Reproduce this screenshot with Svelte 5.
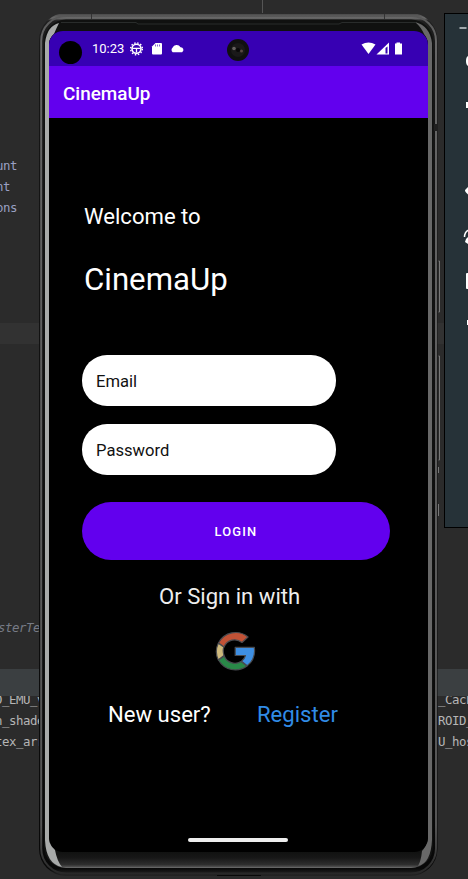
<script>
  const codeLines = ['ount', 'nt ', 'ons'];
  const logRows = [
    { left: 'D_EMU_v', right: '_Cach' },
    { left: 'n_shade', right: 'ROID_' },
    { left: 'tex_arr', right: 'U_hos' }
  ];
</script>

<div class="desktop">
  <div class="editor">
    <div class="tab-gap"><span class="split"></span></div>
    <div class="code">
      {#each codeLines as line}
        <div class="code-line">{line}</div>
      {/each}
    </div>
    <div class="caret-row"></div>
    <div class="hint">sterTe.</div>
    <div class="panel-head"></div>
    <div class="log">
      {#each logRows as row}
        <div class="log-row"><span>{row.left}</span><span class="right">{row.right}</span></div>
      {/each}
    </div>
  </div>

  <div class="toolbar">
    <svg width="23" height="513" viewBox="445 14 23 513">
      <rect x="459.500" y="27" width="7" height="2" fill="#a0a8ac" />
      <g fill="#fff">
        <path d="M468 56q-2 1-2 5t2 5z" />
        <rect x="466" y="102" width="3" height="6" />
        <path d="M468 187q-3.500 3-3 4t3 3.500z" />
        <path d="M468 237q-3 2-3 5l3 2z" />
        <rect x="466" y="273" width="3" height="16" rx="1" />
        <rect x="467" y="320" width="2" height="5" />
      </g>
      <path d="M464.500 237q0-5 4-7" fill="none" stroke="#fff" stroke-width="1.500" />
    </svg>
  </div>

  <div class="phone">
    <svg class="frame" width="401" height="864" viewBox="39 13 401 864">
      <defs>
        <linearGradient id="shell" x1="0" y1="13" x2="0" y2="877" gradientUnits="userSpaceOnUse">
          <stop offset="0" stop-color="#1a1a1a" />
          <stop offset=".0018" stop-color="#505050" />
          <stop offset=".006" stop-color="#6c6c6c" />
          <stop offset=".009" stop-color="#202020" />
          <stop offset=".05" stop-color="#161616" />
          <stop offset=".99" stop-color="#080808" />
          <stop offset=".995" stop-color="#1b1b1b" />
          <stop offset="1" stop-color="#262626" />
        </linearGradient>
        <linearGradient id="glass" x1="0" y1="851" x2="0" y2="868" gradientUnits="userSpaceOnUse">
          <stop offset="0" stop-color="#101110" />
          <stop offset=".4" stop-color="#171717" />
          <stop offset=".8" stop-color="#2e2e2e" />
          <stop offset=".94" stop-color="#505050" />
          <stop offset="1" stop-color="#777" />
        </linearGradient>
        <linearGradient id="rim" x1="0" y1="13" x2="0" y2="877" gradientUnits="userSpaceOnUse">
          <stop offset="0" stop-color="#555" />
          <stop offset=".03" stop-color="#666" />
          <stop offset=".94" stop-color="#555" />
          <stop offset=".985" stop-color="#303030" />
          <stop offset="1" stop-color="#252525" />
        </linearGradient>
      </defs>
      <path d="M438.500 261h1v51h-1M438.500 356h1v104h-1M438.500 467v6M438.500 504v12" fill="none" stroke="#777" />
      <rect x="39" y="13" width="398.500" height="863" rx="27" fill="url(#shell)" />
      <rect x="41.200" y="16" width="394.800" height="857.500" rx="25" fill="none" stroke="url(#rim)" stroke-width="2" />
      <rect x="44" y="19.500" width="389" height="848.500" rx="22" fill="url(#glass)" />
      <path d="M45 840V43Q47 26 59 23Q56 29 54 34Q49 38 49 45V838Q51 845 55 850Q57 861 62 867Q46 864 45 840Z" fill="#a8aaa9" />
      <path d="M432 840V43Q430 26 415 22Q421 27 424 34Q428 39 428 45V838Q426 847 422 851Q421 861 418 866Q431 863 432 840Z" fill="#686868" />
      <path d="M61 22.500h75l2 1.500h201l3-1.500h74" stroke="#292c2b" fill="none" />
      <path d="M91.500 14v5M384.500 14v5" stroke="#333" />
      <path d="M217 875.500h44" stroke="#090909" />
      <rect x="434" y="124" width="3" height="7" fill="#202020" />
    </svg>

    <main class="screen">
      <header class="status">
        <span class="punch"></span>
        <span class="time">10:23</span>
        <svg class="left-icons" width="60" height="16" viewBox="130 41 60 16">
          <circle cx="136.500" cy="48.800" r="4.500" fill="none" stroke="#fff" stroke-width="1.600" />
          <circle cx="136.500" cy="48.800" r="5.900" fill="none" stroke="#fff" stroke-width="1.400" stroke-dasharray="1.500 1.589" />
          <path d="M132.500 48.300h8M136.500 48.500v4" stroke="#fff" stroke-width="1.300" />
          <path d="M155.500 43h5.500q1 0 1 1v9.500q0 1-1 1h-8q-1 0-1-1V46.500z" fill="#fff" />
          <path d="M155.500 44.500v2M157.500 44.500v2M159.500 44.500v2" stroke="#3700b3" stroke-width=".6" />
          <path d="M172.700 52.200a2.800 2.800 0 0 1-.2-4.400 4.500 4.500 0 0 1 8-.6 2.700 2.700 0 0 1 1.600 5z" fill="#fff" />
        </svg>
        <svg class="camera" width="22" height="22" viewBox="0 0 22 22">
          <circle cx="11" cy="11" r="11" fill="#101010" />
          <circle cx="11" cy="11" r="7" fill="#1a1919" />
          <circle cx="7" cy="9.500" r="1.800" fill="#65605e" />
          <circle cx="14.500" cy="12" r="1.500" fill="#594845" />
          <circle cx="11" cy="11" r="2" fill="#080808" />
        </svg>
        <svg class="right-icons" width="42" height="14" viewBox="361 41 42 14">
          <path d="M361.500 44.500Q368.500 40.500 375.500 44.500L368.500 54z" fill="#fff" />
          <path d="M376.500 54.500L389 42.500V54.500z" fill="#fff" />
          <path d="M385.500 48l2-1.500v7h-2z" fill="#3700b3" />
          <path d="M396.500 42.500h3.500v1h2v11h-7v-11h1.500z" fill="#fff" />
        </svg>
      </header>
      <div class="appbar">CinemaUp</div>

      <section class="content">
        <p class="welcome">Welcome to</p>
        <h1>CinemaUp</h1>
        <div class="field">Email</div>
        <div class="field second">Password</div>
        <button type="button">LOGIN</button>
        <p class="or">Or Sign in with</p>
        <svg class="google" width="42" height="42" viewBox="215.500 630 42 42">
          <g stroke="#494b50" stroke-width="1.200" stroke-linejoin="round">
            <path d="M219 643A19.300 19.300 0 0 1 248.500 637L242.500 642.500A11.500 11.500 0 0 0 224.500 647z" fill="#c15236" />
            <path d="M218.800 643.200L224.300 647Q223 651 224.500 655.500L218.800 660Q214.800 651.500 218.800 643.200z" fill="#cfb97c" />
            <path d="M219 660L224.700 656A11.500 11.500 0 0 0 241.500 661.500L247.500 666A19.300 19.300 0 0 1 219 660z" fill="#298848" />
            <path d="M235.700 647.300H254.800Q256.500 659 247.700 665.700L242 661.200Q245 659 246 655.500H235.700z" fill="#3e8fe3" />
          </g>
        </svg>
        <div class="signup"><span>New user?</span><span class="register">Register</span></div>
        <div class="home-bar"></div>
      </section>
    </main>
  </div>
</div>

<style>
  :global(body) { margin: 0; background: #2b2b2b; }
  .desktop {
    position: relative;
    width: 468px;
    height: 879px;
    overflow: hidden;
    background: #2b2b2b;
    font-family: Roboto, "Noto Sans", sans-serif;
  }
  .editor {
    display: flex;
    flex-direction: column;
    height: 879px;
    font-family: "DejaVu Sans Mono", monospace;
    font-size: 12.4px;
    letter-spacing: -0.47px;
    line-height: 21px;
    white-space: pre;
  }
  .tab-gap { height: 155px; padding-left: 262px; }
  .split { display: block; width: 1px; height: 13px; background: #555; }
  .code { height: 168px; width: 17px; overflow: hidden; color: #9aa0c3; }
  .code-line { display: flex; justify-content: flex-end; }
  .caret-row { height: 21px; background: #323232; }
  .hint { margin-top: 273px; height: 21px; text-indent: -2px; color: #777b86; font-style: italic; }
  .panel-head { margin-top: 31px; height: 27px; background: #3b3f41; }
  .log { overflow: hidden; color: #b5b5b5; flex: 1; }
  .log-row { display: flex; height: 21px; text-indent: -5px; }
  .log-row:first-child { margin-top: -7px; }
  .right { margin-left: auto; width: 30px; flex: none; text-indent: 0; }
  .toolbar {
    position: absolute;
    left: 444px;
    top: 13px;
    width: 24px;
    height: 513px;
    border: 1px solid #000;
    border-right: 0;
    background: #263238;
  }
  .toolbar svg { display: block; }
  .phone {
    position: absolute;
    left: 39px;
    top: 13px;
    width: 401px;
    height: 864px;
    box-sizing: border-box;
    padding: 18px 12px 0 10px;
  }
  .frame { position: absolute; left: 0; top: 0; }
  .screen {
    position: relative;
    width: 379px;
    height: 821px;
    border-radius: 14px;
    overflow: hidden;
    background: #000;
    color: #fff;
    display: flex;
    flex-direction: column;
  }
  .status {
    height: 35px;
    box-sizing: border-box;
    background: #3700b3;
    display: flex;
    align-items: flex-start;
    padding-left: 10px;
  }
  .punch { width: 23px; height: 23px; margin-top: 10px; border-radius: 50%; background: #000; }
  .time { margin: 10px 0 0 10px; width: 38px; font-size: 13px; line-height: 16px; }
  .left-icons { margin-top: 10px; }
  .camera { margin: 8px 0 0 37px; }
  .right-icons { margin: 10px 0 0 112px; }
  .appbar {
    height: 52px;
    line-height: 55px;
    padding-left: 14px;
    background: #6200ee;
    font-size: 18.9px;
    font-weight: 500;
  }
  .content { display: flex; flex-direction: column; padding-left: 33px; }
  p, h1 { margin: 0; font-weight: 400; }
  .welcome { margin: 85px 0 0 2px; font-size: 22.1px; line-height: 26px; }
  h1 { margin: 32px 0 0 2px; font-size: 31.2px; line-height: 38px; }
  .field {
    width: 253.500px;
    height: 51px;
    margin-top: 56px;
    box-sizing: border-box;
    padding-left: 14px;
    border-radius: 25px;
    background: #fff;
    color: #111;
    font-size: 16.6px;
    line-height: 53px;
  }
  .second { margin-top: 17.500px; }
  button {
    width: 308px;
    height: 58px;
    margin-top: 27.500px;
    padding: 1px 0 0;
    border: 0;
    border-radius: 29px;
    background: #6200ee;
    color: #fff;
    font: 500 12.9px Roboto, sans-serif;
    letter-spacing: 1.15px;
  }
  .or { margin: 23px 0 0 77px; font-size: 22.1px; line-height: 26px; color: #eee; }
  .google { margin: 21px 0 0 133px; }
  .signup { display: flex; margin: 29px 0 0 26px; font-size: 22.1px; line-height: 26px; }
  .signup span:first-child { width: 149px; }
  .register { color: #318ce7; }
  .home-bar { width: 100px; height: 4px; margin: 111px 0 0 106px; border-radius: 2px; background: #eee; }
</style>
